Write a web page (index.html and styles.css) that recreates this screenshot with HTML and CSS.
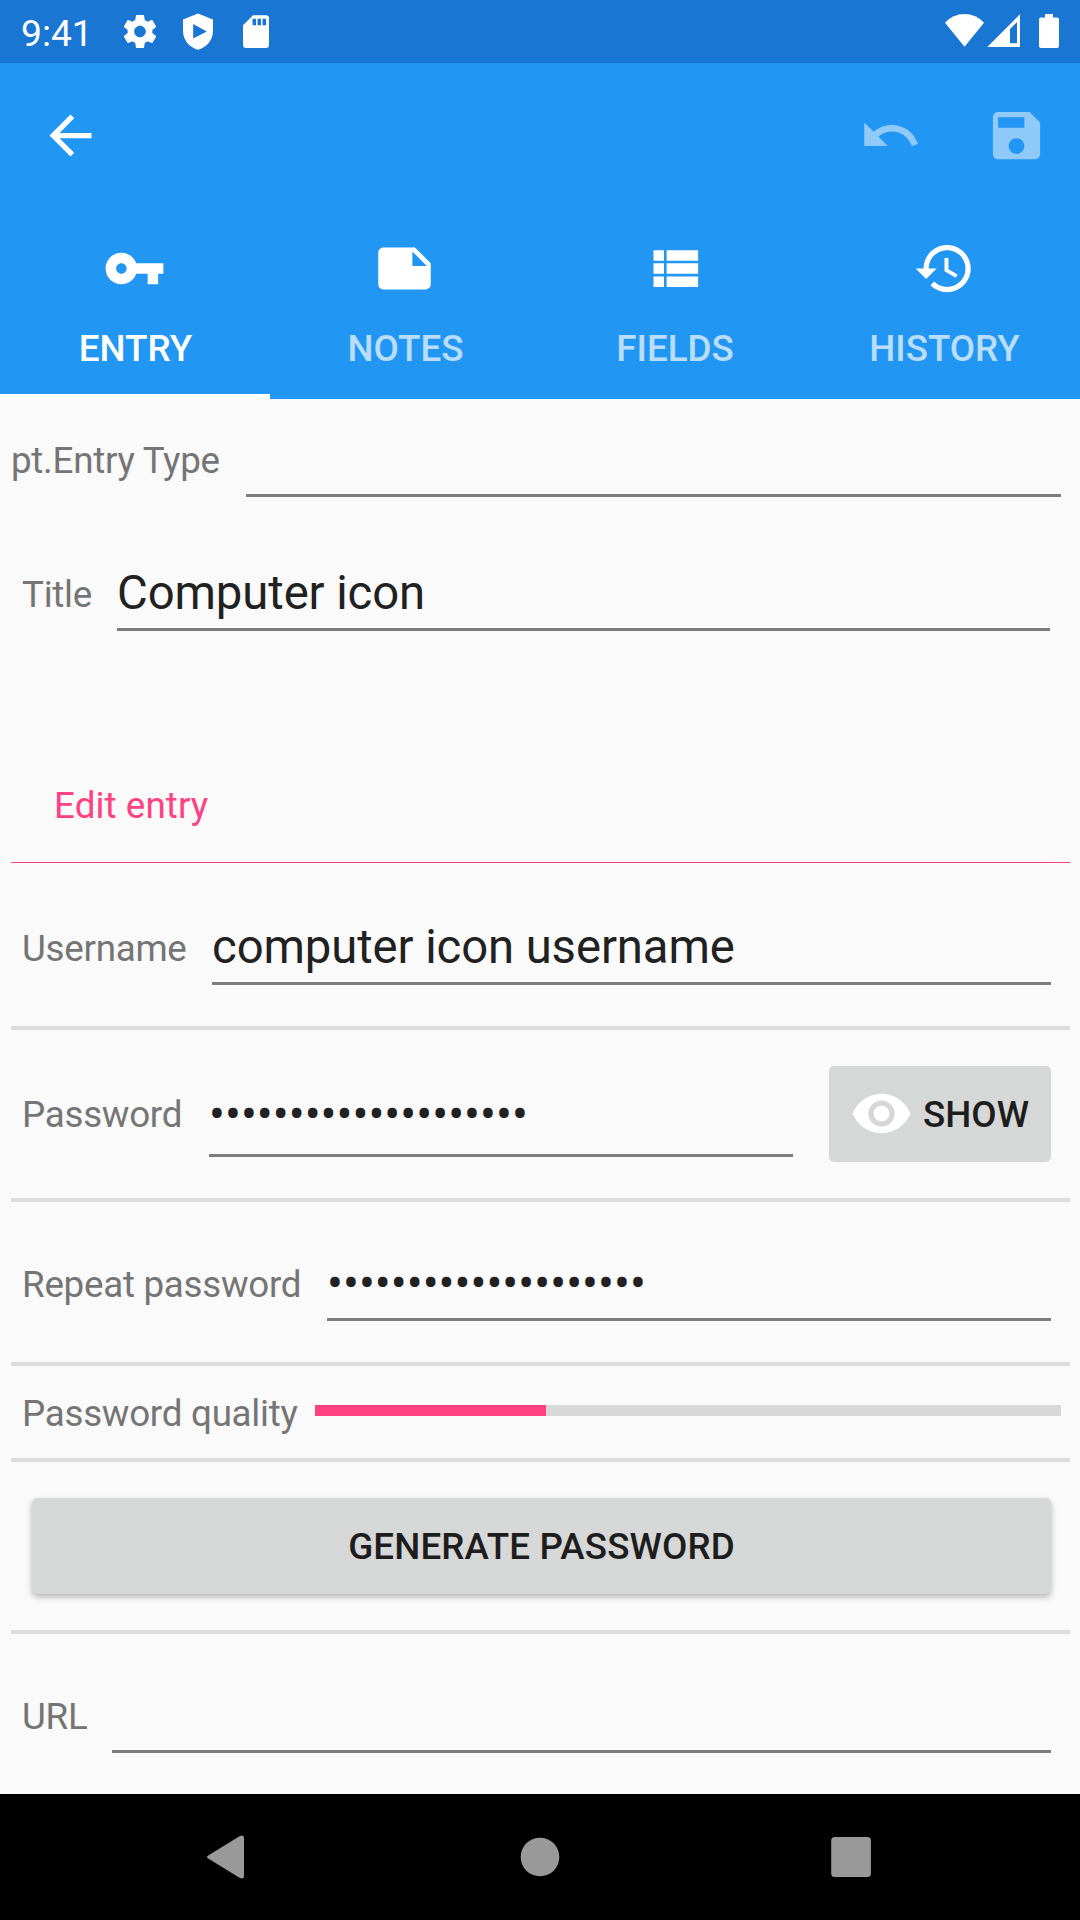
FILE: index.html
```html
<!DOCTYPE html>
<html lang="en">
<head>
<meta charset="utf-8">
<title>Edit entry</title>
<link rel="stylesheet" href="styles.css">
</head>
<body>
<header class="status">
  <span class="clock">9:41</span>
  <svg class="status-left" width="150" height="63" viewBox="120 0 150 63" fill="#fff">
    <path transform="translate(120.2 11.7) scale(1.65)" d="M19.43 12.98c.04-.32.07-.64.07-.98s-.03-.66-.07-.98l2.11-1.65c.19-.15.24-.42.12-.64l-2-3.46c-.12-.22-.39-.3-.61-.22l-2.49 1c-.52-.4-1.08-.73-1.69-.98l-.38-2.65C14.46 2.18 14.25 2 14 2h-4c-.25 0-.46.18-.49.42l-.38 2.65c-.61.25-1.17.59-1.69.98l-2.49-1c-.23-.09-.49 0-.61.22l-2 3.46c-.13.22-.07.49.12.64l2.11 1.65c-.04.32-.07.65-.07.98s.03.66.07.98l-2.11 1.65c-.19.15-.24.42-.12.64l2 3.46c.12.22.39.3.61.22l2.49-1c.52.4 1.08.73 1.69.98l.38 2.65c.03.24.24.42.49.42h4c.25 0 .46-.18.49-.42l.38-2.65c.61-.25 1.17-.59 1.69-.98l2.49 1c.23.09.49 0 .61-.22l2-3.46c.12-.22.07-.49-.12-.64l-2.11-1.65zM12 15.5c-1.93 0-3.5-1.57-3.5-3.5s1.57-3.5 3.5-3.5 3.5 1.57 3.5 3.5-1.57 3.5-3.5 3.5z"/>
    <path fill-rule="evenodd" d="M198 13.600L213 19.500V31C213 40 206.500 47.500 198 49.700C189.500 47.500 183 40 183 31V19.500ZM193.200 24V38.600L206.800 31.500Z"/>
    <path fill-rule="evenodd" d="M253 15.300H266a3 3 0 0 1 3 3V45a3 3 0 0 1-3 3H246a3 3 0 0 1-3-3V25.300ZM252.500 18.700V25.300H256V18.700ZM257.500 18.700V25.300H261V18.700ZM262.500 18.700V25.300H266V18.700Z"/>
  </svg>
  <svg class="status-right" width="116" height="63" viewBox="944 0 116 63" fill="#fff">
    <path d="M945 22.700Q953 14 964.500 14T984 22.700L964.500 46.700Z"/>
    <path fill-rule="evenodd" d="M1020 14.300V47H987.300ZM1017 22L1010 29V43.300H1017Z"/>
    <path d="M1045 14h8v3.500h4a2 2 0 0 1 2 2V46a2 2 0 0 1-2 2h-16a2 2 0 0 1-2-2V19.500a2 2 0 0 1 2-2h4Z"/>
  </svg>
</header>

<div class="toolbar">
  <svg class="icon" viewBox="0 0 24 24"><path d="M20 11H7.830l5.590-5.590L12 4l-8 8 8 8 1.410-1.410L7.830 13H20v-2z"/></svg>
  <svg class="icon undo" viewBox="0 0 24 24"><path d="M12.500 8c-2.650 0-5.050.990-6.900 2.600L2 7v9h9l-3.620-3.620c1.390-1.160 3.160-1.880 5.120-1.880 3.540 0 6.550 2.310 7.600 5.500l2.370-.780C21.080 11.030 17.150 8 12.500 8z"/></svg>
  <svg class="icon save" viewBox="0 0 24 24"><path d="M17 3H5c-1.110 0-2 .900-2 2v14c0 1.100.890 2 2 2h14c1.100 0 2-.900 2-2V7l-4-4zm-5 16c-1.660 0-3-1.340-3-3s1.340-3 3-3 3 1.340 3 3-1.340 3-3 3zm3-10H5V5h10v4z"/></svg>
</div>

<nav class="tabs">
  <div class="tab active">
    <svg class="icon" viewBox="0 0 24 24"><path d="M12.650 10C11.830 7.670 9.610 6 7 6c-3.310 0-6 2.690-6 6s2.690 6 6 6c2.610 0 4.830-1.670 5.650-4H17v4h4v-4h2v-4H12.650zM7 14c-1.100 0-2-.900-2-2s.900-2 2-2 2 .900 2 2-.900 2-2 2z"/></svg>
    <span>ENTRY</span>
  </div>
  <div class="tab">
    <svg class="icon" viewBox="0 0 24 24"><path d="M22 10l-6-6H4c-1.100 0-2 .900-2 2v12.010c0 1.100.900 1.990 2 1.990l16-.010c1.100 0 2-.890 2-1.990v-8zm-7-4.500l5.500 5.500H15V5.500z"/></svg>
    <span>NOTES</span>
  </div>
  <div class="tab">
    <svg class="icon" viewBox="0 0 24 24"><path d="M4 14h4v-4H4v4zm0 5h4v-4H4v4zM4 9h4V5H4v4zm5 5h12v-4H9v4zm0 5h12v-4H9v4zM9 5v4h12V5H9z"/></svg>
    <span>FIELDS</span>
  </div>
  <div class="tab">
    <svg class="icon" viewBox="0 0 24 24"><path d="M13 3c-4.970 0-9 4.030-9 9H1l3.890 3.890.070.140L9 12H6c0-3.870 3.130-7 7-7s7 3.130 7 7-3.130 7-7 7c-1.930 0-3.680-.790-4.940-2.060l-1.420 1.420C8.270 19.990 10.510 21 13 21c4.970 0 9-4.030 9-9s-4.030-9-9-9zm-1 5v5l4.280 2.540.720-1.210-3.500-2.080V8H12z"/></svg>
    <span>HISTORY</span>
  </div>
</nav>

<main class="form">
  <div class="row type-row"><label class="label">pt.Entry Type</label><div class="field"></div></div>
  <div class="row title-row"><label class="label">Title</label><div class="field">Computer icon</div></div>
  <div class="section-title">Edit entry</div>
  <div class="cell">
    <div class="row user-row"><label class="label">Username</label><div class="field">computer icon username</div></div>
  </div>
  <div class="cell password-cell">
    <div class="row password-row"><label class="label">Password</label><div class="field dots">••••••••••••••••••••</div></div>
    <div class="button show">
      <svg class="icon" viewBox="0 0 24 24"><path d="M12 4.500C7 4.500 2.730 7.610 1 12c1.730 4.390 6 7.500 11 7.500s9.270-3.110 11-7.500c-1.730-4.390-6-7.500-11-7.500zM12 17c-2.760 0-5-2.240-5-5s2.240-5 5-5 5 2.240 5 5-2.240 5-5 5zm0-8c-1.660 0-3 1.340-3 3s1.340 3 3 3 3-1.340 3-3-1.340-3-3-3z"/></svg>
      <span>SHOW</span>
    </div>
  </div>
  <div class="cell repeat-cell">
    <div class="row repeat-row"><label class="label">Repeat password</label><div class="field dots">••••••••••••••••••••</div></div>
  </div>
  <div class="cell quality-cell">
    <span class="label">Password quality</span>
    <div class="meter"><div class="meter-fill" style="width:31%"></div></div>
  </div>
  <div class="cell generate-cell"><div class="button generate">GENERATE PASSWORD</div></div>
  <div class="row url-row"><label class="label">URL</label><div class="field"></div></div>
</main>

<footer class="navbar">
  <svg width="1080" height="126" viewBox="0 1794 1080 126" fill="#999">
    <path d="M209 1855L239.500 1836.200Q244 1834 244 1838V1876Q244 1880 239.500 1877.800L209 1859Q205 1857 209 1855Z"/>
    <circle cx="540" cy="1857" r="19.300"/>
    <rect x="831.200" y="1837" width="39.700" height="40" rx="3.500"/>
  </svg>
</footer>
</body>
</html>
```
FILE: styles.css
```css
* { box-sizing: border-box; }

body {
  margin: 0;
  width: 1080px;
  height: 1920px;
  display: flex;
  flex-direction: column;
  overflow: hidden;
  background: #fafafa;
  font-family: Roboto, sans-serif;
  font-size: 36.75px;
  line-height: 44px;
  white-space: nowrap;
}

svg { display: block; flex: none; }

.icon { width: 63px; height: 63px; fill: #fff; }

.status {
  height: 63px;
  background: #1976d2;
  color: #fff;
  display: flex;
  padding: 0 20px 0 21px;
}
.clock { width: 99px; padding-top: 11px; font-size: 37.2px; }
.status-right { margin-left: auto; }

.toolbar {
  height: 147px;
  background: #2196f3;
  display: flex;
  align-items: center;
  padding: 0 32px 2px 39px;
}
.undo { margin-left: auto; opacity: .5; }
.save { margin-left: 63px; opacity: .5; }

.tabs {
  height: 189px;
  background: #2196f3;
  display: grid;
  grid-template-columns: repeat(4, 1fr);
  font-weight: 500;
  color: rgba(255, 255, 255, .7);
}
.tab {
  display: flex;
  flex-direction: column;
  align-items: center;
  padding-top: 27px;
  gap: 27px;
}
.tab .icon { margin-right: 2px; }
.tab:nth-child(-n+2) span { margin-left: 1px; }
.tab:last-child span { margin-right: 1px; }
.tab.active { color: #fff; border-bottom: 5px solid #fff; }

.form { height: 1395px; display: flex; flex-direction: column; }

.row { display: flex; align-items: flex-end; }
.label { flex: none; color: #757575; padding-bottom: 14px; letter-spacing: -.27px; }
.field {
  flex: 1;
  height: 66px;
  border-bottom: 3px solid #7c7c7c;
  color: #212121;
  font-size: 47.25px;
  line-height: 56px;
  letter-spacing: -.09px;
}
.dots { letter-spacing: 0; padding-top: 1px; }

.type-row { height: 98px; padding: 0 19px 0 11px; }
.type-row .label { width: 235px; }
.title-row { height: 134px; padding: 0 30px 0 22px; }
.title-row .label { width: 95px; }

.section-title {
  height: 232px;
  margin: 0 10px 0 11px;
  padding: 153px 0 0 43px;
  color: #ff4081;
  letter-spacing: .1px;
  border-bottom: 1px solid #ff4081;
}

.cell {
  margin: 0 10px 0 11px;
  padding: 0 19px 0 11px;
  border-bottom: 4px solid #dcdcdc;
  height: 167px;
}
.user-row { height: 122px; }
.user-row .label { width: 190px; }

.password-cell { height: 172px; display: flex; gap: 36px; }
.password-row { flex: 1; height: 127px; }
.password-row .label { width: 187px; padding-bottom: 20px; }
.password-row .field { height: 72px; padding-top: 2px; }

.button {
  height: 96px;
  background: #d6d7d7;
  color: #1d1d1d;
  border-radius: 5px;
  font-weight: 500;
  display: flex;
  align-items: center;
}
.show { width: 222px; margin-top: 36px; padding-left: 21px; gap: 10px; }
.show .icon { margin-bottom: 1px; }
.show span { padding-top: 2px; }

.repeat-cell { height: 164px; }
.repeat-row { height: 119px; }
.repeat-row .label { width: 305px; }

.quality-cell { height: 96px; display: flex; padding: 26px 9px 0 11px; }
.quality-cell .label { width: 293px; }
.meter { flex: 1; height: 11px; margin-top: 13px; background: #d8d8d8; }
.meter-fill { height: 100%; background: #ff4081; }

.generate-cell { height: 172px; padding: 36px 19px 0 21px; }
.generate {
  justify-content: center;
  padding-top: 2px;
  letter-spacing: .13px;
  box-shadow: 0 3px 6px rgba(0, 0, 0, .28);
}

.url-row { height: 119px; padding: 0 29px 0 22px; }
.url-row .label { width: 90px; }

.navbar { height: 126px; background: #000; }
```
